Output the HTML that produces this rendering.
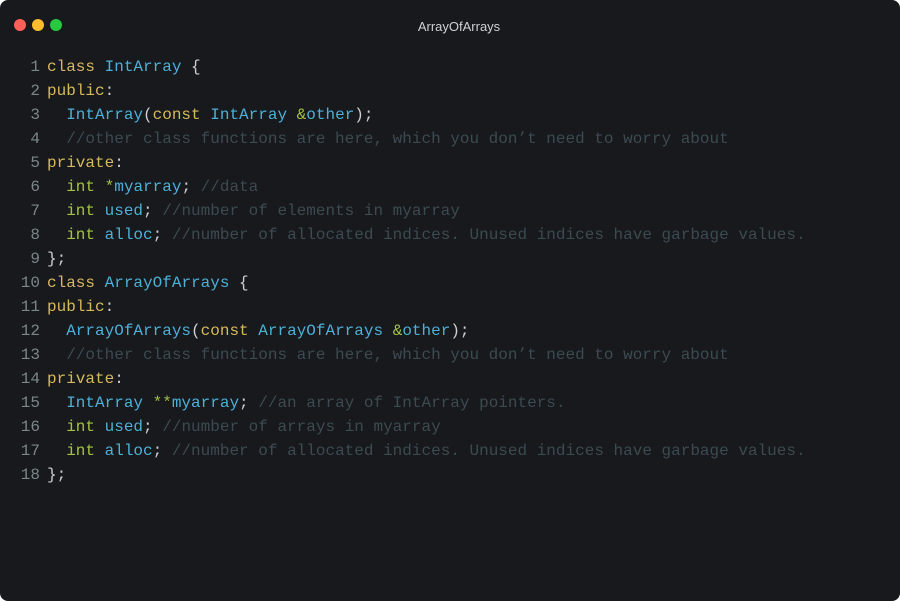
<!DOCTYPE html>
<html><head><meta charset="utf-8"><style>
html,body{margin:0;padding:0;background:#fff;}
.win{position:relative;width:900px;height:601px;background:#17191c;border-radius:8px;overflow:hidden;}
.dot{position:absolute;top:19px;width:12px;height:12px;border-radius:50%;}
.title{position:absolute;top:19px;left:0;width:918px;text-align:center;color:#d0d0d0;font:13px "Liberation Sans",sans-serif;}
.code{position:absolute;top:55px;left:0;font:16px/24px "Liberation Mono",monospace;color:#cfcfcf;white-space:pre;}
.ln{display:inline-block;width:40px;text-align:right;color:#7c878b;margin-right:7px;}
.k{color:#d7b95c}.t{color:#4db0d8}.g{color:#a3c243}.c{color:#3c4a52}.p{color:#cfcfcf}
</style></head><body><div class="win">
<div class="dot" style="left:14px;background:#fe5f57"></div>
<div class="dot" style="left:32px;background:#febc2e"></div>
<div class="dot" style="left:50px;background:#28c840"></div>
<div class="title">ArrayOfArrays</div>
<div class="code"><span class="ln">1</span><span class="k">class</span> <span class="t">IntArray</span> {
<span class="ln">2</span><span class="k">public</span>:
<span class="ln">3</span>  <span class="t">IntArray</span>(<span class="k">const</span> <span class="t">IntArray</span> <span class="g">&amp;</span><span class="t">other</span>);
<span class="ln">4</span>  <span class="c">//other class functions are here, which you don’t need to worry about</span>
<span class="ln">5</span><span class="k">private</span>:
<span class="ln">6</span>  <span class="g">int</span> <span class="g">*</span><span class="t">myarray</span>; <span class="c">//data</span>
<span class="ln">7</span>  <span class="g">int</span> <span class="t">used</span>; <span class="c">//number of elements in myarray</span>
<span class="ln">8</span>  <span class="g">int</span> <span class="t">alloc</span>; <span class="c">//number of allocated indices. Unused indices have garbage values.</span>
<span class="ln">9</span>};
<span class="ln">10</span><span class="k">class</span> <span class="t">ArrayOfArrays</span> {
<span class="ln">11</span><span class="k">public</span>:
<span class="ln">12</span>  <span class="t">ArrayOfArrays</span>(<span class="k">const</span> <span class="t">ArrayOfArrays</span> <span class="g">&amp;</span><span class="t">other</span>);
<span class="ln">13</span>  <span class="c">//other class functions are here, which you don’t need to worry about</span>
<span class="ln">14</span><span class="k">private</span>:
<span class="ln">15</span>  <span class="t">IntArray</span> <span class="g">**</span><span class="t">myarray</span>; <span class="c">//an array of IntArray pointers.</span>
<span class="ln">16</span>  <span class="g">int</span> <span class="t">used</span>; <span class="c">//number of arrays in myarray</span>
<span class="ln">17</span>  <span class="g">int</span> <span class="t">alloc</span>; <span class="c">//number of allocated indices. Unused indices have garbage values.</span>
<span class="ln">18</span>};</div>
</div></body></html>
